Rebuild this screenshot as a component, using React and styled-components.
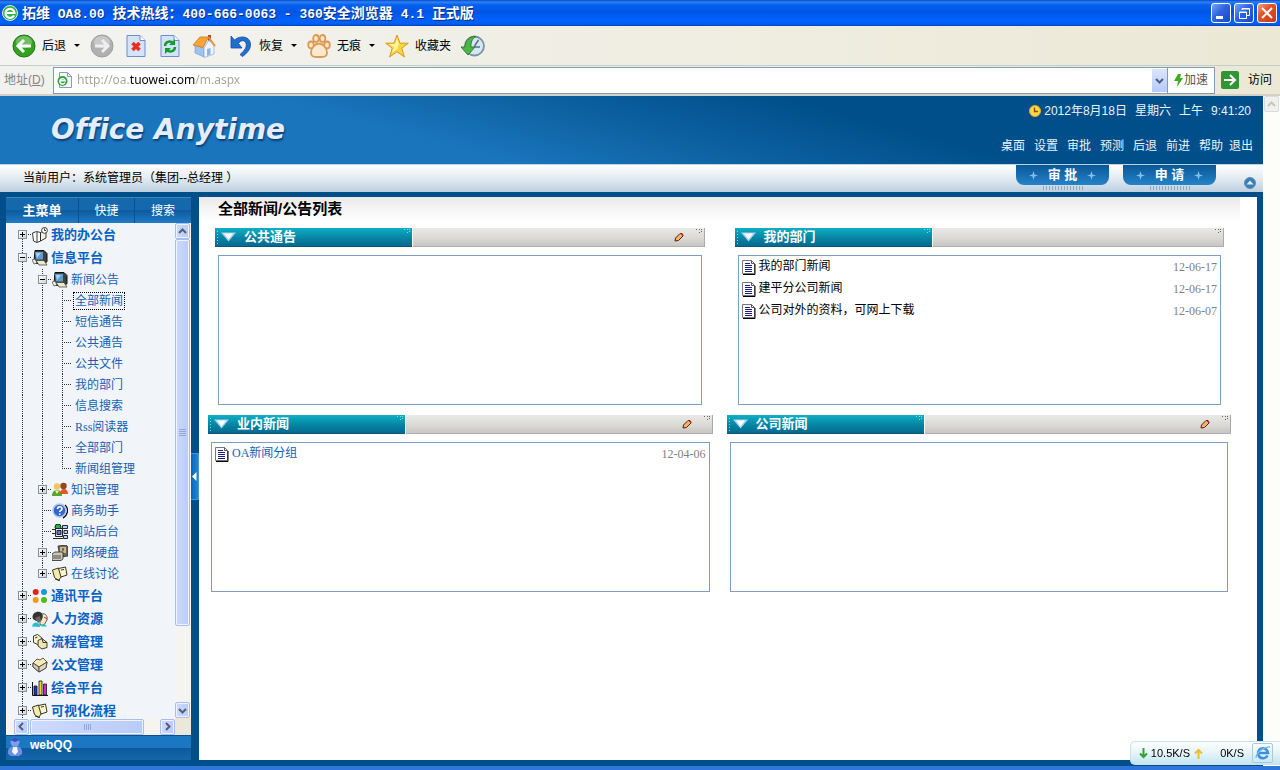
import React from "react";
import styled, { createGlobalStyle, css } from "styled-components";

const cjk = `"Noto Sans CJK SC", sans-serif`;
const sans = `"Liberation Sans", ${cjk}`;
const serif = `"Liberation Serif", ${cjk}`;

const GlobalStyle = createGlobalStyle`
  * { box-sizing: border-box; }
  body { margin: 0; font: 12px/16px ${sans}; color: #000; background: #004f8a; }
  ul { list-style: none; margin: 0; padding: 0; }
  a { color: inherit; text-decoration: none; }
  button { border: 0; padding: 0; margin: 0; background: none; font: inherit; color: inherit; }
  h1, h2 { margin: 0; }
  svg { display: block; flex: none; }
`;

/* ---------- browser window ---------- */

const Shell = styled.div`
  display: flex;
  flex-direction: column;
  height: 100vh;
  min-height: 600px;
`;

const TitleBar = styled.header`
  display: flex;
  align-items: center;
  gap: 4px;
  height: 26px;
  padding: 0 3px 0 2px;
  background: linear-gradient(#0a48c8 0, #2c83f5 2px, #0560ee 5px, #0055e5 12px, #0062fb 20px, #0060f5 24px, #0140c0 26px);
`;

const WindowTitle = styled.h1`
  flex: 1;
  font: bold 14px/20px ${cjk};
  color: #fff;
  text-shadow: 1px 1px 0 #0a2c7c;
  white-space: nowrap;
`;

const Latin = styled.span`
  font-family: "Liberation Mono", monospace;
  font-size: 13px;
  white-space: pre;
`;

const WindowButtons = styled.div`
  display: flex;
  gap: 3px;
`;

const WindowButton = styled.button`
  display: flex;
  align-items: center;
  justify-content: center;
  width: 20px;
  height: 20px;
  border: 1px solid #fff;
  border-radius: 3px;
  background: ${(p) =>
    p.$close
      ? "linear-gradient(135deg, #f0a08a, #e2532c 40%, #c63b14)"
      : "linear-gradient(135deg, #7ba4f5, #2f63e0 45%, #1c47cc)"};
`;

const Toolbar = styled.nav`
  display: flex;
  align-items: center;
  gap: 11px;
  height: 40px;
  padding: 0 11px;
  background: linear-gradient(90deg, #f3f3f1, #efede0 60%, #ebe8d6);
  border-bottom: 1px solid #c5cdc9;
`;

const ToolGroup = styled.div`
  display: flex;
  align-items: center;
  gap: 8px;
`;

const ToolButton = styled.button`
  display: flex;
  align-items: center;
  gap: 6px;
  height: 28px;
  padding: 0 1px;
  white-space: nowrap;
`;

const Caret = styled.span`
  margin: 0 0 0 2px;
  border: 3px solid transparent;
  border-top-color: #000;
  border-bottom: 0;
`;

const AddressBar = styled.form`
  display: flex;
  align-items: center;
  height: 30px;
  padding: 0 8px 0 4px;
  background: linear-gradient(90deg, #f1f1ef, #efede0 60%, #ebe8d6);
  border-bottom: 2px solid #d2d0c6;
`;

const AddressLabel = styled.label`
  width: 49px;
  color: #85857c;
  white-space: nowrap;
`;

const AddressField = styled.div`
  display: flex;
  flex: 1;
  align-items: center;
  height: 27px;
  padding-left: 3px;
  border: 1px solid #7f9db9;
  background: #fff;
`;

const UrlInput = styled.input`
  flex: 1;
  min-width: 0;
  height: 20px;
  margin-left: 4px;
  padding: 0;
  border: 0;
  outline: 0;
  font: 12px/20px "Noto Sans", sans-serif;
  color: transparent;
  background: linear-gradient(90deg, #a5a29a 0 53px, #000 53px 118px, #a5a29a 118px);
  background-clip: text;
  -webkit-background-clip: text;
`;

const DropButton = styled.button`
  display: flex;
  align-items: center;
  justify-content: center;
  width: 15px;
  height: 23px;
  background: linear-gradient(#dbe5fd, #b6caf8);
`;

const SpeedButton = styled.button`
  display: flex;
  align-items: center;
  justify-content: center;
  gap: 1px;
  width: 47px;
  height: 27px;
  border: 1px solid #7f9db9;
  border-left: 0;
  background: #fff;
  color: #555;
`;

const GoButton = styled.button`
  display: flex;
  align-items: center;
  gap: 9px;
  margin-left: 6px;
`;

/* ---------- page frame ---------- */

const Viewport = styled.div`
  display: flex;
  flex: 1;
  min-height: 0;
  border-bottom: 4px solid #2f75dc;
`;

const Page = styled.div`
  display: flex;
  flex: 1;
  flex-direction: column;
  min-width: 0;
  background: #004f8a;
`;

const PageScroll = styled.div`
  width: 17px;
  padding: 0 2px 0 1px;
  background: #fdfdf9;
`;

const Banner = styled.header`
  display: flex;
  justify-content: space-between;
  height: 68px;
  padding: 0 10px 0 51px;
  background: linear-gradient(15deg, #1b75bd 0 34%, #0d62a2 50%, #004f8a 68%);
`;

const Logo = styled.div`
  font: italic bold 28px/68px "DejaVu Sans", sans-serif;
  font-variant-ligatures: none;
  color: #e4edfb;
  text-shadow: 1px 2px 2px #0b3f75;
  white-space: nowrap;
`;

const BannerSide = styled.div`
  display: flex;
  flex-direction: column;
  align-items: flex-end;
  gap: 19px;
  padding-top: 7px;
  color: #e8f3fd;
  white-space: nowrap;
`;

const Clock = styled.div`
  display: flex;
  align-items: center;
  gap: 8px;
  padding-right: 2px;
`;

const Stamp = styled.span`
  display: flex;
  align-items: center;
  gap: 3px;
`;

const TopMenu = styled.nav`
  display: flex;
  gap: 6px;
`;

const TopLinks = styled.div`
  display: flex;
  gap: 9px;
`;

const UserBar = styled.div`
  display: flex;
  justify-content: space-between;
  height: 28px;
  padding: 0 7px 0 23px;
  border-top: 1px solid #bcd3e4;
  background: linear-gradient(#fefefe, #e3ebf2 50%, #bccfdf);
`;

const CurrentUser = styled.div`
  line-height: 27px;
  white-space: nowrap;
`;

const Actions = styled.div`
  display: flex;
  gap: 14px;
`;

const ActionColumn = styled.div`
  display: flex;
  flex-direction: column;
  align-items: center;
  gap: 1px;
`;

const ActionTab = styled.button`
  display: flex;
  align-items: center;
  justify-content: center;
  gap: 10px;
  width: 93px;
  height: 20px;
  border-radius: 0 0 8px 8px;
  background: linear-gradient(#0a5796, #2583c9);
  color: #fff;
  font-size: 13px;
  font-weight: bold;
  white-space: pre;
`;

const Ticks = styled.span`
  width: 40px;
  height: 4px;
  background: repeating-linear-gradient(90deg, #8ea9c1 0 1px, transparent 1px 3px);
`;

const CollapseButton = styled.button`
  align-self: flex-end;
  margin: 0 0 3px 14px;
`;

const Body = styled.div`
  display: flex;
  flex: 1;
  min-height: 0;
  padding: 5px 6px 6px;
`;

/* ---------- sidebar ---------- */

const Sidebar = styled.aside`
  display: flex;
  flex-direction: column;
  width: 185px;
`;

const SideTabs = styled.div`
  display: grid;
  grid-template-columns: 72px 56px 1fr;
  height: 26px;
  border-top: 1px solid #3c86c0;
  background: linear-gradient(#1668ac 0 50%, #0d5a9d 50%, #1f7cc6);
`;

const SideTab = styled.button`
  color: #fff;
  font-size: ${(p) => (p.$active ? "13px" : "12px")};
  font-weight: ${(p) => (p.$active ? "bold" : "normal")};
  border-left: ${(p) => (p.$active ? "0" : "1px solid #0b5190")};
`;

const TreeFrame = styled.div`
  display: grid;
  flex: 1;
  grid-template: minmax(0, 1fr) 17px / minmax(0, 1fr) 16px;
  min-height: 0;
  background: #f1f5f9;
`;

const Tree = styled.ul`
  overflow: hidden;
  padding-left: 6px;
`;

const TreeRow = styled.li`
  display: flex;
  align-items: center;
  height: ${(p) => (p.$top ? "23px" : "21px")};
`;

const lines = {
  full: "1px 100%",
  top: "1px 50%",
  bottom: "1px 50%",
  none: "0 0",
};

const Guide = styled.span`
  display: flex;
  align-items: center;
  flex: none;
  width: 20px;
  height: 100%;
  padding-left: 6px;
  background-image: repeating-linear-gradient(#333 0 1px, transparent 1px 2px),
    repeating-linear-gradient(90deg, #333 0 1px, transparent 1px 2px);
  background-repeat: no-repeat;
  background-size: ${(p) => lines[p.$line]}, ${(p) => (p.$branch ? "10px 1px" : "0 0")};
  background-position: 10px ${(p) => (p.$line === "bottom" ? "100%" : "0")}, 10px 50%;
`;

const Toggle = styled.button`
  width: 9px;
  height: 9px;
  border: 1px solid #8291a3;
  background:
    linear-gradient(#000, #000) center / 5px 1px no-repeat,
    linear-gradient(#000, #000) center / 1px ${(p) => (p.$open ? "0" : "5px")} no-repeat,
    linear-gradient(135deg, #fff, #d5d2ca);
`;

const TreeLink = styled.a`
  margin-left: 3px;
  line-height: 14px;
  white-space: nowrap;
  font-family: ${serif};
  color: #1560b5;
  ${(p) =>
    p.$top &&
    css`
      font-size: 13px;
      font-weight: bold;
      color: #0862c4;
    `}
  ${(p) =>
    p.$focused &&
    css`
      outline: 1px dotted #000;
      outline-offset: 1px;
    `}
`;

const scrollFace = css`
  border: 1px solid #a6bdf0;
  border-radius: 2px;
  box-shadow: inset 0 0 0 1px #eef3ff;
  background: linear-gradient(90deg, #cddafc, #b9cbf8);
`;

const ScrollButton = styled.button`
  display: flex;
  align-items: center;
  justify-content: center;
  flex: none;
  width: 15px;
  height: 16px;
  ${scrollFace}
  ${(p) =>
    p.$disabled &&
    css`
      border-color: #dcdcd4;
      background: #f1f0ea;
    `}
`;

const VScroll = styled.div`
  display: flex;
  flex-direction: column;
  background: #f5f4ee;
`;

const VThumb = styled.div`
  display: flex;
  align-items: center;
  justify-content: center;
  flex: 387 0 0;
  width: 15px;
  ${scrollFace}
`;

const VRest = styled.div`
  flex: 76 0 0;
`;

const HScroll = styled.div`
  display: flex;
  align-items: center;
  gap: 1px;
  padding-left: 8px;
  background: #f5f4ee;
`;

const HThumb = styled.div`
  display: flex;
  align-items: center;
  justify-content: center;
  flex: 113 0 0;
  height: 16px;
  ${scrollFace}
`;

const HRest = styled.div`
  flex: 14 0 0;
`;

const Corner = styled.div`
  background: #ebe8d9;
`;

const ChatBar = styled.a`
  display: flex;
  gap: 6px;
  height: 25px;
  padding: 1px;
  background: linear-gradient(#1b77c2 0 50%, #0b5a9c 50%, #1766ab);
  color: #fff;
  font-weight: bold;
  border-top: 1px solid #0a5190;
`;

const Divider = styled.div`
  display: flex;
  align-items: center;
  width: 8px;
`;

const DividerHandle = styled.button`
  display: flex;
  align-items: center;
  width: 8px;
  height: 47px;
  margin-bottom: 4px;
  border: 1px solid #4794d3;
  border-left: 0;
  background: linear-gradient(90deg, #0866b8, #1c86dc);
`;

/* ---------- news panels ---------- */

const Content = styled.main`
  flex: 1;
  min-width: 0;
  background: #fff;
`;

const Heading = styled.h2`
  height: 25px;
  margin-right: 17px;
  padding-left: 19px;
  background: linear-gradient(#ece8e8, #f6f5f5 50%, #fff);
  font-size: 15px;
  line-height: 24px;
`;

const PanelRow = styled.div`
  display: grid;
  grid-template-columns: 1fr 1fr;
  gap: ${(p) => (p.$wide ? "14px" : "30px")};
  padding: ${(p) => (p.$wide ? "10px 26px 0 9px" : "6px 33px 0 16px")};
`;

const PanelHead = styled.div`
  display: flex;
  gap: 1px;
  height: 19px;
`;

const PanelTab = styled.h2`
  display: flex;
  align-items: center;
  width: 197px;
  padding-left: 6px;
  gap: 8px;
  border-bottom: 1px solid #045878;
  background:
    repeating-linear-gradient(transparent 0 2px, #7fdbe6 2px 3px) 2px 1px / 1px 16px no-repeat,
    linear-gradient(#0db0c4, #0788a6 50%, #05698f);
  color: #fff;
  font-size: 13px;
  line-height: 18px;
`;

const TabCorner = styled.span`
  align-self: flex-start;
  margin-left: auto;
  padding: 1px 2px 0 0;
`;

const PanelTools = styled.div`
  display: flex;
  flex: 1;
  align-items: center;
  justify-content: flex-end;
  gap: 12px;
  padding-right: 2px;
  border-right: 1px solid #aaa;
  border-bottom: 1px solid #b0aeb2;
  background: linear-gradient(#e9e9e7, #d9d8d5 60%, #c8c5c2);
`;

const Dots = styled.span`
  align-self: flex-start;
  padding-top: 1px;
`;

const NewsList = styled.ul`
  height: 150px;
  margin: 8px 3px 0;
  padding: 0 3px;
  border: 1px solid #7f9dc0;
`;

const NewsItem = styled.li`
  display: flex;
  align-items: center;
  gap: 3px;
  height: 22px;
  font-family: ${serif};
`;

const NewsLink = styled.a`
  flex: 1;
  line-height: 20px;
  margin-bottom: 2px;
  color: ${(p) => (p.$blue ? "#1560b5" : "#000")};
`;

const NewsDate = styled.time`
  color: #808080;
`;

const SpeedMeter = styled.div`
  position: fixed;
  right: 0;
  bottom: 5px;
  display: flex;
  align-items: center;
  width: 150px;
  height: 24px;
  padding: 0 6px 0 8px;
  border: 1px solid #c9e2ec;
  border-right: 0;
  border-radius: 5px 0 0 5px;
  background: linear-gradient(#fdfefe, #e6f4f9 50%, #c6e5f0);
`;

const Rate = styled.span`
  width: ${(p) => (p.$last ? "41px" : "42px")};
  margin-right: ${(p) => (p.$last ? "8px" : "4px")};
  font-size: 11px;
  text-align: right;
`;

const EngineButton = styled.button`
  display: flex;
  align-items: center;
  justify-content: center;
  width: 21px;
  height: 20px;
  border: 1px solid #a9cbd9;
  border-radius: 2px;
`;

/* ---------- drawings ---------- */

const Chevron = ({ dir = "down", color = "#4d6185" }) => {
  const turn = { down: 0, left: 90, up: 180, right: 270 }[dir];
  return (
    <svg width="9" height="9" viewBox="0 0 9 9">
      <path d="M1 3l3.5 3.5L8 3" fill="none" stroke={color} strokeWidth="2" transform={`rotate(${turn} 4.5 4.5)`} />
    </svg>
  );
};

const Grip = ({ vertical }) => (
  <svg width="9" height="9" viewBox="0 0 9 9" stroke="#8ea7e0">
    {[1.5, 3.5, 5.5, 7.5].map((n) =>
      vertical ? <path key={n} d={`M1 ${n}h7`} /> : <path key={n} d={`M${n} 2v6`} />
    )}
  </svg>
);

const RoundArrow = ({ gray }) => (
  <svg width="24" height="24" viewBox="0 0 24 24">
    <circle cx="12" cy="12" r="11" fill={gray ? "#b0b0b0" : "#35a022"} stroke={gray ? "#9e9e9e" : "#227a14"} />
    <ellipse cx="12" cy="8" rx="8" ry="6" fill="#fff" opacity=".3" />
    <path
      d={gray ? "M5 12h12M12 6l6 6-6 6" : "M19 12H7M12 6l-6 6 6 6"}
      fill="none"
      stroke={gray ? "#eee" : "#fff"}
      strokeWidth="3"
    />
  </svg>
);

const PageIcon = ({ refresh }) => (
  <svg width="24" height="24" viewBox="0 0 24 24">
    <path d="M3 1.5h13l5 5v16H3z" fill="#d3e3fa" stroke="#6c8fca" />
    <path d="M16 1.5v5h5" fill="#fff" stroke="#6c8fca" />
    {refresh ? (
      <g fill="none" stroke="#159a2b" strokeWidth="2.4">
        <path d="M7 12c0-4 5-6 8-3M17 13c0 4-5 6-8 3" />
        <path d="M17 5v6h-6zM7 20v-6h6z" fill="#159a2b" stroke="none" />
      </g>
    ) : (
      <path d="M8.500 9l7 7M15.500 9l-7 7" stroke="#e8301c" strokeWidth="3.600" />
    )}
  </svg>
);

const HomeIcon = () => (
  <svg width="24" height="24" viewBox="0 0 24 24">
    <path d="M16 1h3v7h-3z" fill="#b5472b" />
    <path d="M3 11l9 3v9l-9-4z" fill="#9fc3ee" stroke="#7f9fd0" strokeWidth=".7" />
    <path d="M12 14l5-8 5 6v8l-10 3.500z" fill="#eef4fd" stroke="#8aa6cf" strokeWidth=".7" />
    <path d="M8 3h8.500L11 13.500 1 11z" fill="#f7a43a" stroke="#d98424" />
    <path d="M16.500 3L23 12" stroke="#e8963a" strokeWidth="1.800" />
    <path d="M15 15l3.500-1v6.500L15 22z" fill="#8cb3e6" />
  </svg>
);

const UndoIcon = () => (
  <svg width="24" height="24" viewBox="0 0 24 24">
    <path d="M2 2l3.500 4C11 1 21 2 21.500 10c.3 5-3 9-8 12.500l-2.500-2C16 16 18 13 17 9.500c-1.300-4-5-3.500-7.500 0L13 14H2z" fill="#1f6fd0" stroke="#154f9e" strokeWidth=".8" />
  </svg>
);

const PawIcon = () => (
  <svg width="24" height="24" viewBox="0 0 24 24" fill="#fbe9cf" stroke="#dc9a55" strokeWidth="1.800">
    <ellipse cx="4" cy="11" rx="2.800" ry="3.500" />
    <ellipse cx="9" cy="4.500" rx="2.800" ry="3.500" />
    <ellipse cx="15.500" cy="4.500" rx="2.800" ry="3.500" />
    <ellipse cx="20" cy="11" rx="2.800" ry="3.500" />
    <path d="M12 9.500c4 0 8 5 8 9 0 5-4.500 4.500-8 4.500s-8 .5-8-4.500c0-4 4-9 8-9z" />
  </svg>
);

const StarIcon = () => (
  <svg width="24" height="24" viewBox="0 0 24 24">
    <path d="M12 1l3 8.200h8.300l-6.500 5 2.600 8.800L12 17.700 4.600 23l2.600-8.800-6.500-5H9z" fill="#fbd53b" stroke="#d59a1c" strokeLinejoin="round" />
    <path d="M12 4l2 6-2 5-5 4 2-6-5-3h6z" fill="#fff3a0" />
  </svg>
);

const HistoryIcon = () => (
  <svg width="24" height="24" viewBox="0 0 24 24">
    <circle cx="13.500" cy="12" r="9.500" fill="#d6e6f3" stroke="#7d93a5" strokeWidth="1.800" />
    <path d="M13.500 12l4-6M13 13h6" stroke="#5b7287" strokeWidth="1.500" />
    <path d="M0 13h4C4 6 9 2 15 2.500c-3.500 2-5.500 5.500-5 10.500h4l-7 8z" fill="#4fb548" stroke="#2a8030" />
  </svg>
);

const BrowserLogo = () => (
  <svg width="16" height="16" viewBox="0 0 16 16">
    <circle cx="8" cy="8" r="7.500" fill="#33b24a" stroke="#d9f3dc" />
    <path d="M12 10.500A4.500 4.500 0 1 1 12.500 8H4.500" fill="none" stroke="#fff" strokeWidth="2.200" />
  </svg>
);

const SiteIcon = () => (
  <svg width="16" height="16" viewBox="0 0 16 16">
    <path d="M2.500.5h8l4 4v11h-12z" fill="#f4f8fb" stroke="#8d9cab" />
    <path d="M10.500.5v4h4" fill="none" stroke="#8d9cab" />
    <circle cx="5.500" cy="9" r="5" fill="#2da33d" />
    <path d="M8 10.500A2.700 2.700 0 1 1 8.200 8.800H3.500" fill="none" stroke="#fff" strokeWidth="1.500" />
  </svg>
);

const Spark = () => (
  <svg width="9" height="9" viewBox="0 0 9 9">
    <path d="M4.500 0l1 3.500 3.500 1-3.500 1-1 3.500-1-3.500-3.500-1 3.500-1z" fill="#9fd6f8" opacity=".8" />
  </svg>
);

const TabArrow = () => (
  <svg width="15" height="10" viewBox="0 0 15 10">
    <path d="M0 .5h15L7.500 9.500z" fill="#a9d0f7" />
    <path d="M3 1.500h9L7.500 7.500z" fill="#fff" />
  </svg>
);

const CornerDots = ({ color }) => (
  <svg width="6" height="6" viewBox="0 0 6 6" fill={color}>
    <path d="M0 0h1v1H0zM3 0h1v1H3zM5 0h1v1H5zM3 3h1v1H3zM5 2h1v1H5z" />
  </svg>
);

const Pencil = () => (
  <svg width="10" height="10" viewBox="0 0 10 10">
    <path d="M1 9l.5-3L6 1.500h2L9 3v1L4.500 8.500z" fill="#f6b25c" stroke="#5c1f14" />
    <path d="M6.500 1.500L9 4" stroke="#c33" />
  </svg>
);

const DocIcon = () => (
  <svg width="14" height="15" viewBox="0 0 14 15">
    <path d="M.5.5h9l3 3v10H.5z" fill="#fff" stroke="#777" />
    <path d="M13 4v10.500H1" fill="none" stroke="#000" />
    <path d="M9.500.5v3h3" fill="none" stroke="#555" />
    <path d="M3 3.500h5M3 5.500h7M3 7.500h7M3 9.500h7M3 11.500h7" stroke="#1c1c86" />
  </svg>
);

const treeArt = {
  book: (
    <g stroke="#222" strokeWidth=".9">
      <path d="M.5 6l4-1.500 4 1v8.500l-3.500 1.500L1.500 14z" fill="#fff" />
      <path d="M8.500 5.500L14 3v8l-5.500 3z" fill="#f4f0d8" />
      <path d="M5 5v10" fill="none" />
      <circle cx="12.500" cy="3.400" r="2.900" fill="#fff" />
      <path d="M12.500 1.500v2H14" fill="none" />
    </g>
  ),
  pc: (
    <g>
      <path d="M3 .5h9l3 3v8l-2 2H4l-2-2z" fill="#3b4046" stroke="#111" />
      <path d="M3 2h8v7.500H4z" fill="#5f9ccc" />
      <path d="M4 3h5L5 8z" fill="#a9d2ef" />
      <path d="M4 10.500h8l3 4.500H7z" fill="#efe9c8" stroke="#333" strokeWidth=".7" />
      <path d="M0 10l3-1 2 4-3 1z" fill="#eee" stroke="#444" strokeWidth=".7" />
    </g>
  ),
  people: (
    <g>
      <circle cx="5" cy="4.500" r="3.200" fill="#f6c25a" />
      <path d="M0 14c0-4 2-6 5-6s5 2 5 6z" fill="#57a336" />
      <circle cx="11.500" cy="4" r="3.200" fill="#8c4a20" />
      <path d="M8 12c0-3 1.500-5 4-5s4 2 4 5z" fill="#e0582a" />
      <path d="M3 8.500h4L5 12z" fill="#fff3a8" />
    </g>
  ),
  help: (
    <g>
      <path d="M13 2c4 4 3 10-2 13" fill="none" stroke="#111" strokeWidth="1.500" />
      <circle cx="7.500" cy="7.500" r="6.500" fill="#3466cf" stroke="#b5c8ea" strokeWidth="1.500" />
      <path d="M5.500 6c0-3 4.500-3 4.500-.3 0 1.600-2.300 1.600-2.300 3.300M7.700 10.500v1.500" fill="none" stroke="#fff" strokeWidth="1.600" />
    </g>
  ),
  site: (
    <g stroke="#111" strokeWidth=".9">
      <circle cx="6" cy="3" r="3" fill="#30a848" />
      <path d="M3.500 4.500h7v8h-7z" fill="#e8eef8" />
      <path d="M5 6.500h4v4H5z" fill="#5c82e0" />
      <path d="M10.500 1.500h5v3h-5zM12 6.500h3.500v3H12zM11.500 11.500h4v3h-4z" fill="#b5d2ff" />
      <path d="M0 5.500h3M0 9.500h3M1 14.500h10" />
    </g>
  ),
  disk: (
    <g>
      <path d="M6 1l8-1 2 2v9l-8 1z" fill="#6f675c" stroke="#2b2824" strokeWidth=".8" />
      <path d="M8 2h6v6H8z" fill="#cbb98c" />
      <path d="M11 3v3" stroke="#222" />
      <path d="M0 9l3-2h8v7l-2 1.500H0z" fill="#c9c5bb" stroke="#2b2824" strokeWidth=".8" />
      <path d="M1 11h8M1 13h8" stroke="#55504a" />
    </g>
  ),
  notes: (
    <g stroke="#221f10" strokeWidth=".9">
      <path d="M.5 4l6-2 4 7-4 5.500-4-3z" fill="#f3ecaa" />
      <path d="M6.500 2.500l7-1.500 1.500 8-6 2z" fill="#fbf7cf" />
      <path d="M3 13l5 1.500M9 4l3-.5" fill="none" />
    </g>
  ),
  dots: (
    <g>
      <circle cx="3.700" cy="4" r="3" fill="#e0241c" />
      <circle cx="12" cy="4" r="3" fill="#1f94dc" />
      <circle cx="3.700" cy="12" r="3" fill="#f09a18" />
      <circle cx="12" cy="12" r="3" fill="#4cbc20" />
    </g>
  ),
  staff: (
    <g>
      <path d="M8 4c4-3 8 0 7 5l-3 5H8z" fill="#f6edc6" stroke="#333" strokeWidth=".8" />
      <path d="M1 8c-2-5 3-8 7-7 4 2 3 6 1 9H4z" fill="#333" />
      <path d="M3 7l5-2 1 5-3 2z" fill="#6b645e" />
      <path d="M0 15.500c1-5 6-5 8-1v1.500z" fill="#1fc3cf" />
      <path d="M9 15.500l3-3 3 3z" fill="#1fc3cf" />
      <path d="M12 6l3 2" stroke="#c22" />
    </g>
  ),
  flow: (
    <g stroke="#2a2718" strokeWidth=".9">
      <path d="M1.500 2l4-1.500 4 3v6l-4 1-4-2z" fill="#f7f3cb" />
      <path d="M6 6.500l4-2 5 4v5l-5 1.500-4-3z" fill="#eee6b2" />
      <path d="M10 4.500l1 4h4M3 4l2.500-1" fill="none" />
    </g>
  ),
  mail: (
    <g stroke="#4c4838" strokeWidth=".9">
      <path d="M1 6l4-4 3 1 3-2 4 4-1 6-7 4-6-5z" fill="#f4eeb6" />
      <path d="M1 6l6 4 8-5" fill="none" />
      <path d="M1 6l6 4v5l-6-5z" fill="#cdc9bd" />
      <path d="M7 10l8-5-1 6-7 4z" fill="#dcd8cb" />
    </g>
  ),
  chart: (
    <g>
      <path d="M.5 2v13.500H16" fill="none" stroke="#111" />
      <path d="M2 6h3v9H2z" fill="#2233c8" stroke="#111" strokeWidth=".8" />
      <path d="M7 1h3v14H7z" fill="#f3d620" stroke="#111" strokeWidth=".8" />
      <path d="M11.500 4h3v11h-3z" fill="#d22ac8" stroke="#111" strokeWidth=".8" />
    </g>
  ),
};

const TreeIcon = ({ name }) => (
  <svg width="16" height="16" viewBox="0 0 16 16">
    {treeArt[name]}
  </svg>
);

/* ---------- data ---------- */

const tree = [
  { text: "我的办公台", icon: "book", guides: ["bottom"], toggle: "closed" },
  { text: "信息平台", icon: "pc", guides: ["full"], toggle: "open" },
  { text: "新闻公告", icon: "pc", guides: ["full", "full"], toggle: "open" },
  { text: "全部新闻", guides: ["full", "full", "full"], focused: true },
  { text: "短信通告", guides: ["full", "full", "full"] },
  { text: "公共通告", guides: ["full", "full", "full"] },
  { text: "公共文件", guides: ["full", "full", "full"] },
  { text: "我的部门", guides: ["full", "full", "full"] },
  { text: "信息搜索", guides: ["full", "full", "full"] },
  { text: "Rss阅读器", guides: ["full", "full", "full"] },
  { text: "全部部门", guides: ["full", "full", "full"] },
  { text: "新闻组管理", guides: ["full", "full", "top"] },
  { text: "知识管理", icon: "people", guides: ["full", "full"], toggle: "closed" },
  { text: "商务助手", icon: "help", guides: ["full", "full"] },
  { text: "网站后台", icon: "site", guides: ["full", "full"] },
  { text: "网络硬盘", icon: "disk", guides: ["full", "full"], toggle: "closed" },
  { text: "在线讨论", icon: "notes", guides: ["full", "top"], toggle: "closed" },
  { text: "通讯平台", icon: "dots", guides: ["full"], toggle: "closed" },
  { text: "人力资源", icon: "staff", guides: ["full"], toggle: "closed" },
  { text: "流程管理", icon: "flow", guides: ["full"], toggle: "closed" },
  { text: "公文管理", icon: "mail", guides: ["full"], toggle: "closed" },
  { text: "综合平台", icon: "chart", guides: ["full"], toggle: "closed" },
  { text: "可视化流程", icon: "notes", guides: ["full"], toggle: "closed" },
];

const departmentNews = [
  { text: "我的部门新闻", date: "12-06-17" },
  { text: "建平分公司新闻", date: "12-06-17" },
  { text: "公司对外的资料，可网上下载", date: "12-06-07" },
];

const TreeItem = ({ item }) => {
  const last = item.guides.length - 1;
  const top = last === 0;
  return (
    <TreeRow $top={top}>
      {item.guides.map((line, i) => (
        <Guide key={i} $line={line} $branch={i === last}>
          {i === last && item.toggle && (
            <Toggle type="button" $open={item.toggle === "open"} aria-label={item.text} />
          )}
        </Guide>
      ))}
      {item.icon && <TreeIcon name={item.icon} />}
      <TreeLink href="#" $top={top} $focused={item.focused}>
        {item.text}
      </TreeLink>
    </TreeRow>
  );
};

const Panel = ({ title, items = [], editable, blue }) => (
  <section>
    <PanelHead>
      <PanelTab>
        <TabArrow />
        {title}
        <TabCorner>
          <CornerDots color="#7fdbe6" />
        </TabCorner>
      </PanelTab>
      <PanelTools>
        {editable && (
          <button type="button" aria-label="编辑">
            <Pencil />
          </button>
        )}
        <Dots>
          <CornerDots color="#666" />
        </Dots>
      </PanelTools>
    </PanelHead>
    <NewsList>
      {items.map((n) => (
        <NewsItem key={n.text}>
          <DocIcon />
          <NewsLink href="#" $blue={blue}>
            {n.text}
          </NewsLink>
          <NewsDate>{n.date}</NewsDate>
        </NewsItem>
      ))}
    </NewsList>
  </section>
);

export default function App() {
  return (
    <Shell>
      <GlobalStyle />
      <TitleBar>
        <BrowserLogo />
        <WindowTitle>
          拓维<Latin> OA8.00 </Latin>技术热线：<Latin>400-666-0063 - 360</Latin>安全浏览器<Latin> 4.1 </Latin>正式版
        </WindowTitle>
        <WindowButtons>
          <WindowButton type="button" aria-label="最小化">
            <svg width="14" height="14" viewBox="0 0 14 14"><path d="M2 10h7v3H2z" fill="#fff" /></svg>
          </WindowButton>
          <WindowButton type="button" aria-label="还原">
            <svg width="14" height="14" viewBox="0 0 14 14" fill="none" stroke="#fff">
              <path d="M2.500 6v6.500h7V6zM2 6.500h8M5 4V2.500h7.500v7H10M5 3h8" />
            </svg>
          </WindowButton>
          <WindowButton type="button" $close aria-label="关闭">
            <svg width="14" height="14" viewBox="0 0 14 14"><path d="M2 2l10 10M12 2L2 12" stroke="#fff" strokeWidth="2" /></svg>
          </WindowButton>
        </WindowButtons>
      </TitleBar>

      <Toolbar>
        <ToolGroup>
          <ToolButton type="button"><RoundArrow />后退<Caret /></ToolButton>
          <ToolButton type="button" aria-label="前进"><RoundArrow gray /></ToolButton>
          <ToolButton type="button" aria-label="停止"><PageIcon /></ToolButton>
          <ToolButton type="button" aria-label="刷新"><PageIcon refresh /></ToolButton>
          <ToolButton type="button" aria-label="主页"><HomeIcon /></ToolButton>
        </ToolGroup>
        <ToolGroup>
          <ToolButton type="button"><UndoIcon />恢复<Caret /></ToolButton>
          <ToolButton type="button"><PawIcon />无痕<Caret /></ToolButton>
          <ToolButton type="button"><StarIcon />收藏夹</ToolButton>
          <ToolButton type="button" aria-label="历史"><HistoryIcon /></ToolButton>
        </ToolGroup>
      </Toolbar>

      <AddressBar onSubmit={(e) => e.preventDefault()}>
        <AddressLabel htmlFor="url">地址(<u>D</u>)</AddressLabel>
        <AddressField>
          <SiteIcon />
          <UrlInput id="url" defaultValue="http://oa.tuowei.com/m.aspx" />
          <DropButton type="button" aria-label="历史地址"><Chevron /></DropButton>
        </AddressField>
        <SpeedButton type="button">
          <svg width="9" height="13" viewBox="0 0 9 13"><path d="M4 0h3L6 4h3L3 13l1-6H0z" fill="#3fae1e" /></svg>
          加速
        </SpeedButton>
        <GoButton type="submit">
          <svg width="18" height="18" viewBox="0 0 18 18">
            <rect width="18" height="18" rx="2" fill="#2f9636" />
            <path d="M3 9h10M9 4l5 5-5 5" fill="none" stroke="#fff" strokeWidth="2" />
          </svg>
          访问
        </GoButton>
      </AddressBar>

      <Viewport>
        <Page>
          <Banner>
            <Logo>Office Anytime</Logo>
            <BannerSide>
              <Clock>
                <Stamp>
                  <svg width="12" height="12" viewBox="0 0 12 12">
                    <circle cx="6" cy="6" r="5.500" fill="#ffd84a" stroke="#e8a820" />
                    <path d="M5.500 2.500v4H9" fill="none" stroke="#8a4a10" strokeWidth="1.400" />
                  </svg>
                  2012年8月18日
                </Stamp>
                <span>星期六</span>
                <span>上午</span>
                <span>9:41:20</span>
              </Clock>
              <TopMenu>
                <TopLinks>
                  {["桌面", "设置", "审批", "预测", "后退", "前进", "帮助"].map((t) => (
                    <a key={t} href="#">{t}</a>
                  ))}
                </TopLinks>
                <a href="#">退出</a>
              </TopMenu>
            </BannerSide>
          </Banner>

          <UserBar>
            <CurrentUser>当前用户：系统管理员（集团--总经理 ）</CurrentUser>
            <Actions>
              {["审 批", "申 请"].map((t) => (
                <ActionColumn key={t}>
                  <ActionTab type="button"><Spark />{t}<Spark /></ActionTab>
                  <Ticks />
                </ActionColumn>
              ))}
              <CollapseButton type="button" aria-label="收起">
                <svg width="12" height="12" viewBox="0 0 12 12">
                  <circle cx="6" cy="6" r="5.500" fill="#3d7fb4" stroke="#5f8fb6" />
                  <path d="M2.500 7.500L6 3.500l3.500 4z" fill="#d9eefb" />
                </svg>
              </CollapseButton>
            </Actions>
          </UserBar>

          <Body>
            <Sidebar>
              <SideTabs>
                <SideTab type="button" $active>主菜单</SideTab>
                <SideTab type="button">快捷</SideTab>
                <SideTab type="button">搜索</SideTab>
              </SideTabs>
              <TreeFrame>
                <Tree>
                  {tree.map((item) => <TreeItem key={item.text} item={item} />)}
                </Tree>
                <VScroll>
                  <ScrollButton type="button" aria-label="向上"><Chevron dir="up" /></ScrollButton>
                  <VThumb><Grip vertical /></VThumb>
                  <VRest />
                  <ScrollButton type="button" aria-label="向下"><Chevron /></ScrollButton>
                </VScroll>
                <HScroll>
                  <ScrollButton type="button" aria-label="向左"><Chevron dir="left" /></ScrollButton>
                  <HThumb><Grip /></HThumb>
                  <HRest />
                  <ScrollButton type="button" aria-label="向右"><Chevron dir="right" /></ScrollButton>
                </HScroll>
                <Corner />
              </TreeFrame>
              <ChatBar href="#">
                <svg width="17" height="19" viewBox="0 0 17 19">
                  <circle cx="8" cy="5" r="4.500" fill="#7da0ee" />
                  <path d="M3 3l5-3 5 3-5 2z" fill="#3556b8" />
                  <path d="M1 17c-1-6 3-8 7-8s8 2 7 8l-3 2H4z" fill="#6b8fe6" />
                  <path d="M6 10h4l1 5-3 3-3-3z" fill="#f2f6ff" />
                </svg>
                webQQ
              </ChatBar>
            </Sidebar>

            <Divider>
              <DividerHandle type="button" aria-label="折叠侧栏">
                <svg width="6" height="9" viewBox="0 0 6 9"><path d="M5.500 0v9L1 4.500z" fill="#fff" /></svg>
              </DividerHandle>
            </Divider>

            <Content>
              <Heading>全部新闻/公告列表</Heading>
              <PanelRow>
                <Panel title="公共通告" editable />
                <Panel title="我的部门" items={departmentNews} />
              </PanelRow>
              <PanelRow $wide>
                <Panel title="业内新闻" editable blue items={[{ text: "OA新闻分组", date: "12-04-06" }]} />
                <Panel title="公司新闻" editable />
              </PanelRow>
            </Content>
          </Body>
        </Page>
        <PageScroll>
          <ScrollButton type="button" $disabled aria-label="页面向上"><Chevron dir="up" color="#c9c7bf" /></ScrollButton>
        </PageScroll>
      </Viewport>

      <SpeedMeter>
        <svg width="9" height="11" viewBox="0 0 9 11"><path d="M4.500 0v9M1 5.500L4.500 9 8 5.500" fill="none" stroke="#2fa52f" strokeWidth="2" /></svg>
        <Rate>10.5K/S</Rate>
        <svg width="9" height="11" viewBox="0 0 9 11"><path d="M4.500 11V2M1 5.500L4.500 2 8 5.500" fill="none" stroke="#e8c02c" strokeWidth="2" /></svg>
        <Rate $last>0K/S</Rate>
        <EngineButton type="button" aria-label="内核">
          <svg width="16" height="16" viewBox="0 0 16 16">
            <path d="M12.500 10.500A5 5 0 1 1 13 8H4" fill="none" stroke="#3b8fe0" strokeWidth="2.600" />
            <path d="M1 13c0-5 8-12 14-11" fill="none" stroke="#7dbcf2" strokeWidth="1.500" />
          </svg>
        </EngineButton>
      </SpeedMeter>
    </Shell>
  );
}
